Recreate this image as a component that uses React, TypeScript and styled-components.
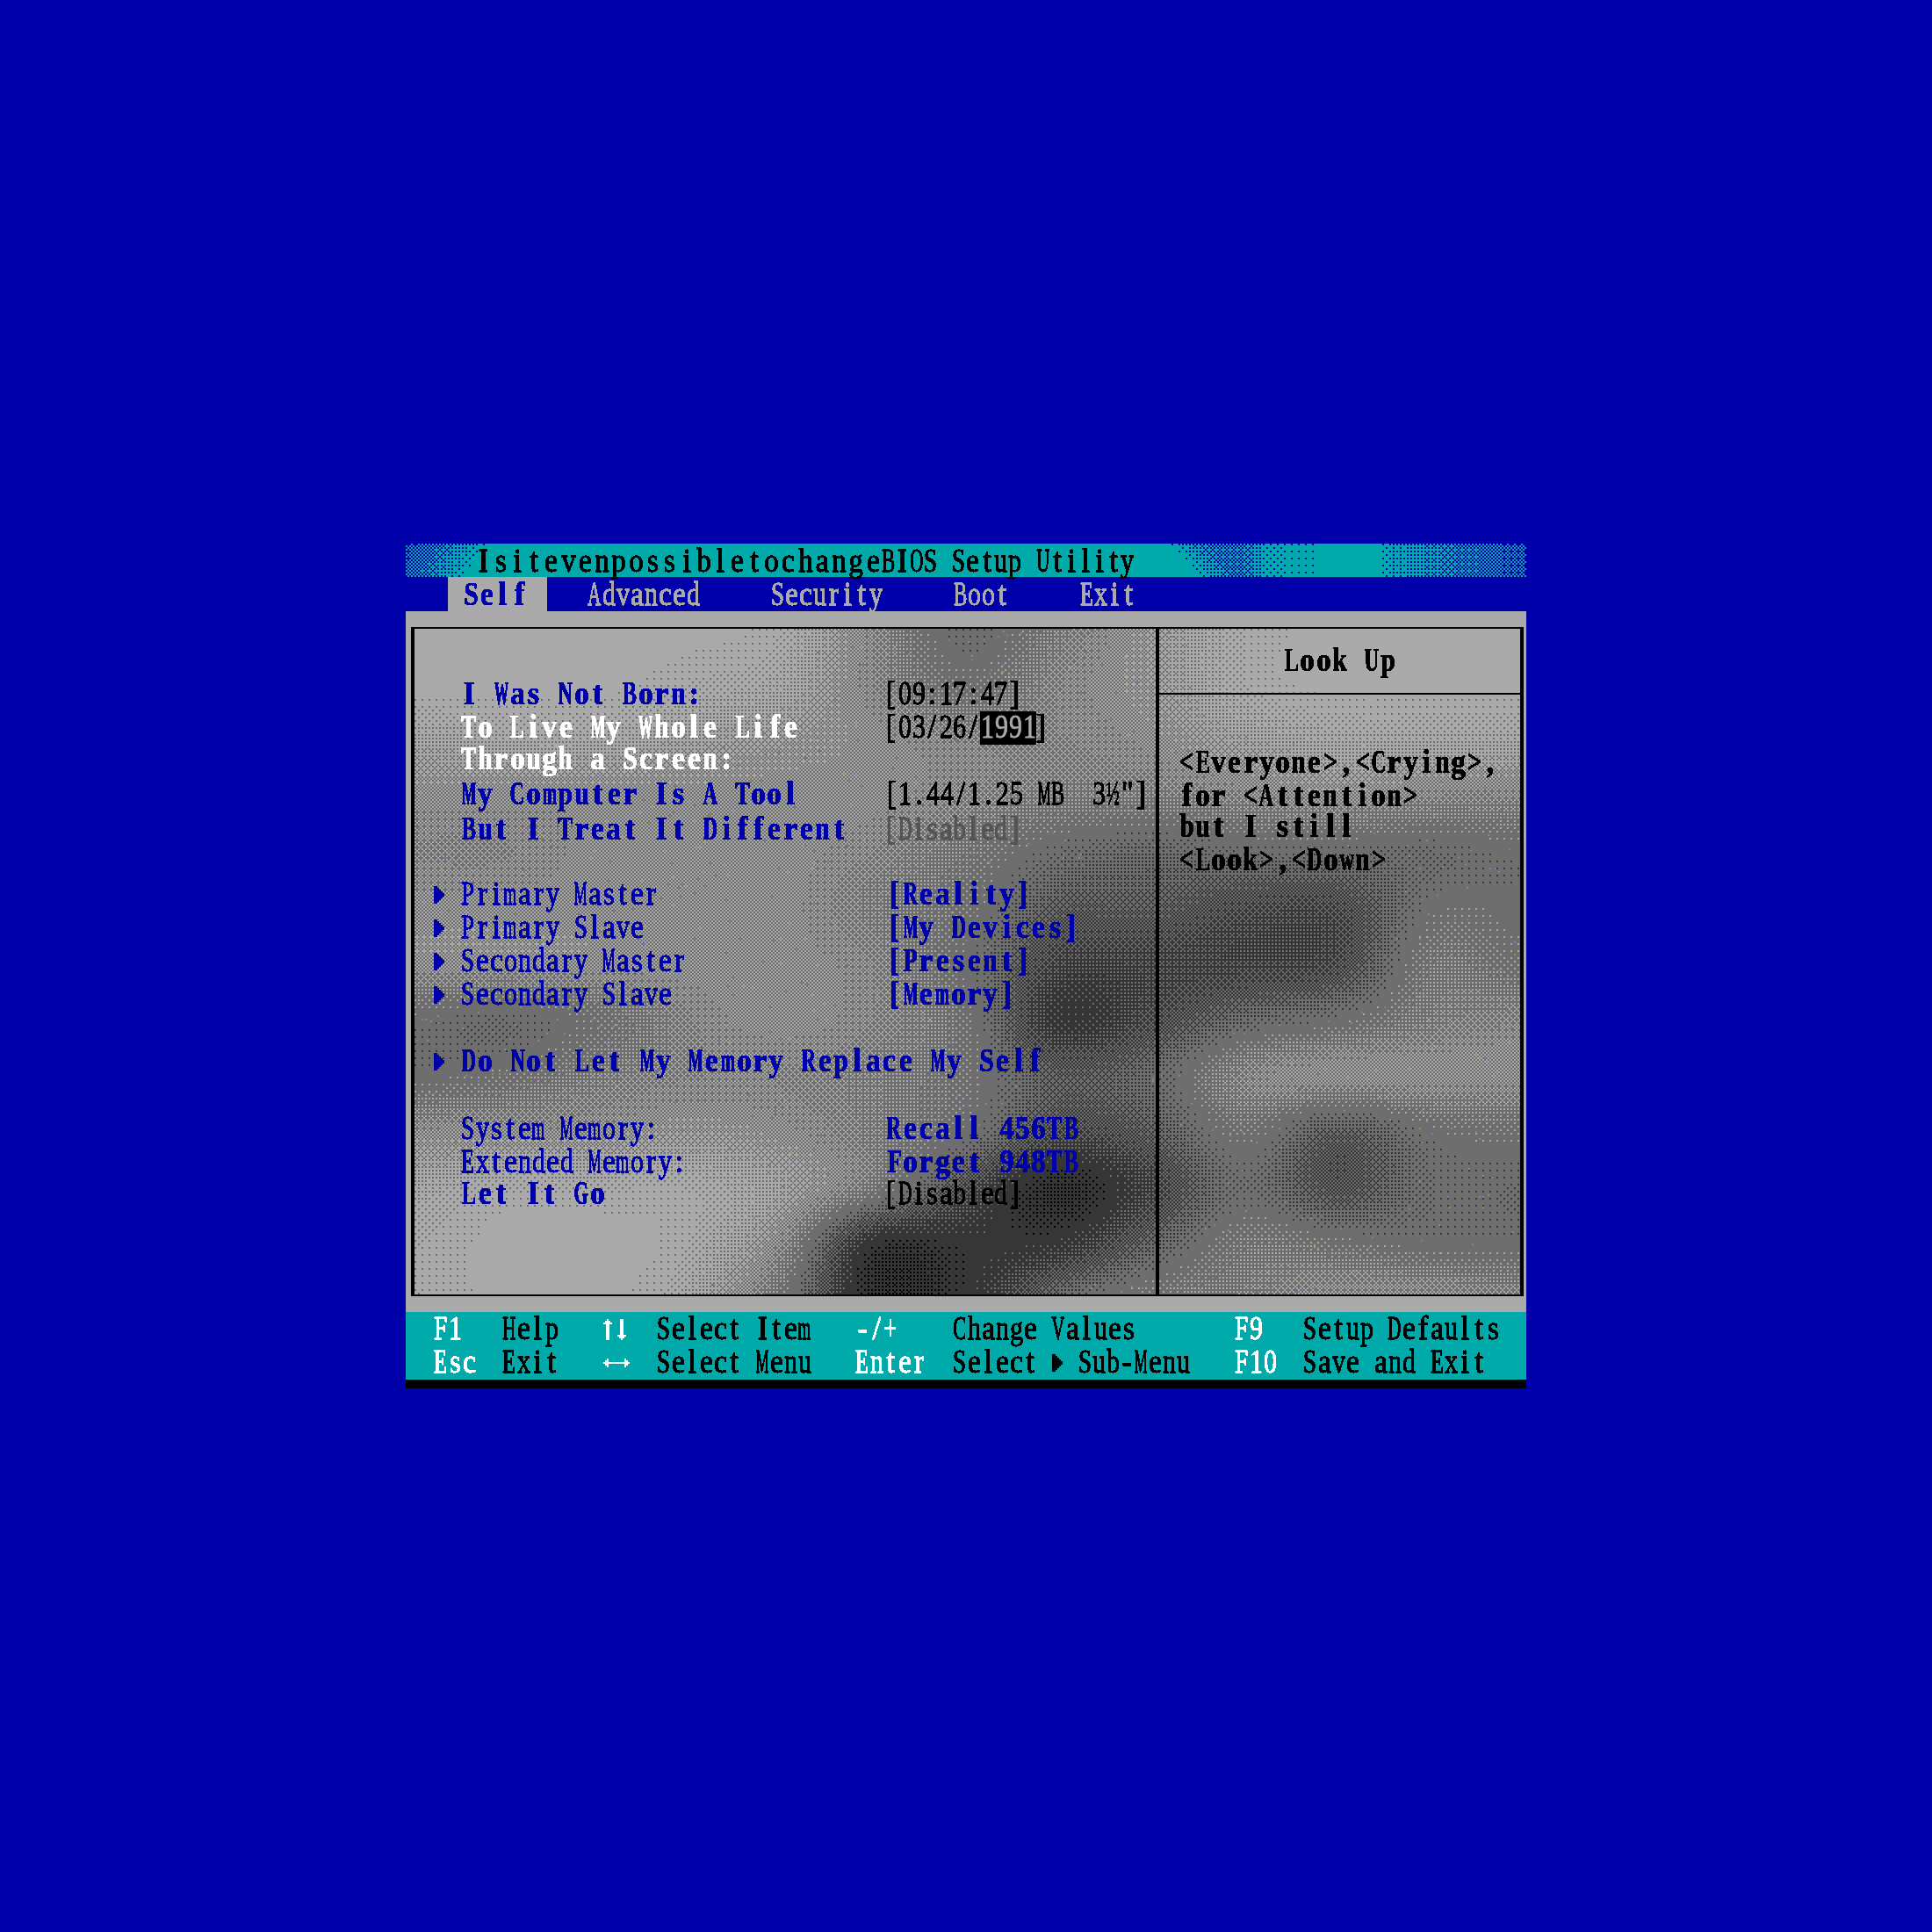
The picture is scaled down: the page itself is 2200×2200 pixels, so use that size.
import React, { useEffect, useRef } from "react";
import styled, { createGlobalStyle } from "styled-components";

const BLUE = "#0000aa";
const TEAL = "#00aaaa";
const GRAY = "#aaaaaa";

const GlobalStyle = createGlobalStyle`
  html, body {
    margin: 0;
    background: ${BLUE};
  }
`;

const Page = styled.div`
  width: 2200px;
  height: 2200px;
  padding: 619px 0 0 462px;
  box-sizing: border-box;
`;

const Screen = styled.div`
  width: 1276px;
  display: flex;
  flex-direction: column;
`;

const TitleBar = styled.div`
  position: relative;
  height: 38px;
  box-sizing: border-box;
  background: ${TEAL};
  padding: 4px 0 0 79px;
  display: flex;
  align-items: center;
`;

const TabBar = styled.div`
  height: 39px;
  padding-left: 48px;
  display: flex;
`;

const Tab = styled.div<{ $active?: boolean }>`
  display: flex;
  align-items: center;
  padding: ${(p) => (p.$active ? "2px 23px 0 17px" : "2px 40px 0")};
  margin-right: ${(p) => (p.$active ? "6px" : "0")};
  background: ${(p) => (p.$active ? GRAY : "transparent")};
`;

const Band = styled.div`
  background: ${GRAY};
  padding: 18px 3px 18px 6px;
`;

const Box = styled.div`
  position: relative;
  height: 762px;
  box-sizing: border-box;
  border: solid #000;
  border-width: 2px 4px;
  display: flex;
  overflow: hidden;
`;

const Wallpaper = styled.canvas`
  position: absolute;
  left: 0;
  top: 0;
  width: 1260px;
  height: 758px;
  image-rendering: pixelated;
`;

const TitleDither = styled.canvas`
  position: absolute;
  left: 0;
  top: 0;
  width: 1276px;
  height: 38px;
  image-rendering: pixelated;
`;

const MainPanel = styled.div`
  position: relative;
  width: 844px;
  box-sizing: border-box;
  padding: 56px 0 0 22px;
  display: flex;
  flex-direction: column;
`;

const Row = styled.div<{ $top?: number }>`
  height: 38px;
  margin-top: ${(p) => p.$top ?? 0}px;
  display: grid;
  grid-template-columns: 31px 482px 1fr;
  align-items: center;
`;

const Value = styled.div<{ $wide?: boolean }>`
  padding-left: ${(p) => (p.$wide ? "2px" : "0")};
`;

const SidePanel = styled.div`
  position: relative;
  flex: 1;
  border-left: 4px solid #000;
  display: flex;
  flex-direction: column;
`;

const SideHead = styled.div`
  height: 73px;
  border-bottom: 2px solid #000;
  display: flex;
  align-items: center;
  justify-content: center;
`;

const SideBody = styled.div`
  padding: 59px 0 0 22px;
  display: flex;
  flex-direction: column;
`;

const SideLine = styled.div<{ $top?: number }>`
  height: 38px;
  margin-top: ${(p) => p.$top ?? 0}px;
`;

const Footer = styled.div`
  background: ${TEAL};
  height: 76px;
  border-bottom: 10px solid #000;
  padding: 1px 0 0 32px;
  display: grid;
  grid-template-columns: 78px 115px 61px 226px 111px 321px 78px 1fr;
  grid-auto-rows: 38px;
  align-items: center;
`;

const SubMenu = styled.div`
  display: flex;
  align-items: center;
  gap: 1px;
`;

const Line = styled.span<{ $color: string; $bg?: string }>`
  display: inline-block;
  white-space: pre;
  color: ${(p) => p.$color};
  background: ${(p) => p.$bg ?? "transparent"};
  filter: url(#crisp);
  vertical-align: top;
`;

const Glyph = styled.span<{ $bold?: boolean }>`
  display: inline-block;
  font: ${(p) => (p.$bold ? 700 : 400)} 38px/38px "Liberation Serif", serif;
  -webkit-text-stroke: ${(p) => (p.$bold ? "0.5px" : "0.8px")} currentColor;
  white-space: pre;
`;

const Icon = styled.svg`
  display: block;
  shape-rendering: crispEdges;
`;

const measure = (() => {
  const ctx = document.createElement("canvas").getContext("2d")!;
  const cache = new Map<string, number>();
  return (ch: string, bold: boolean) => {
    const key = ch + (bold ? "b" : "r");
    if (!cache.has(key)) {
      ctx.font = `${bold ? 700 : 400} 38px "Liberation Serif"`;
      cache.set(key, ctx.measureText(ch).width);
    }
    return cache.get(key)!;
  };
})();

function Txt({
  children,
  w = 16,
  bold = false,
  color = "#000",
  bg,
}: {
  children: string;
  w?: number;
  bold?: boolean;
  color?: string;
  bg?: string;
}) {
  return (
    <Line $color={color} $bg={bg}>
      {[...children].map((ch, i) => {
        const nat = measure(ch, bold);
        const target = w > 17 ? 16.5 : 15;
        const scale = nat * 0.9 < target ? 0.9 : target / nat;
        return (
          <Glyph
            key={i}
            $bold={bold}
            style={{
              margin: `0 ${(w - nat) / 2}px`,
              transform: `translateY(-2px) scaleX(${scale})`,
            }}
          >
            {ch}
          </Glyph>
        );
      })}
    </Line>
  );
}

const Triangle = ({ color = BLUE }: { color?: string }) => (
  <Icon width="12" height="20" viewBox="0 0 12 20">
    <path
      fill={color}
      d="M0 0h4v2h2v2h2v2h2v2h2v4h-2v2h-2v2h-2v2h-2v2h-4z"
    />
  </Icon>
);

const UpDown = () => (
  <Icon width="30" height="24" viewBox="0 0 30 24">
    <path
      fill="#fff"
      d="M4 0h2v2h2v2h2v2h-3v18h-4v-18h-3v-2h2v-2h2zM19 0h4v18h3v2h-2v2h-2v2h-2v-2h-2v-2h-2v-2h3z"
    />
  </Icon>
);

const LeftRight = () => (
  <Icon width="30" height="12" viewBox="0 0 30 12">
    <path
      fill="#fff"
      d="M0 5h30v2h-30zM2 3h2v6h-2zM4 1h2v10h-2zM24 1h2v10h-2zM26 3h2v6h-2z"
    />
  </Icon>
);

// darkness of the wallpaper, 0 = light gray, 1 = mid gray, 2 = dark gray, 3 = black
const CLOUDS = [
  [0, 0, 0, 0, 0.1, 0.6, 1.1, 0.7, 0.4, 0.1, 0, 0, 0],
  [0, 0, 0, 0.1, 0.2, 0.6, 0.9, 0.6, 0.4, 0.1, 0, 0, 0],
  [0.25, 0.2, 0.2, 0.3, 0.4, 0.5, 0.6, 0.6, 0.5, 0.3, 0.2, 0.2, 0.2],
  [0.5, 0.5, 0.5, 0.5, 0.5, 0.5, 0.6, 0.7, 0.7, 0.6, 0.5, 0.6, 0.6],
  [0.6, 0.6, 0.5, 0.5, 0.5, 0.6, 0.8, 1.1, 1.2, 1.1, 1.1, 1.1, 1],
  [0.5, 0.5, 0.5, 0.5, 0.5, 0.7, 0.9, 1.4, 1.4, 1.6, 1.6, 1, 1],
  [0.5, 0.5, 0.5, 0.5, 0.5, 0.6, 1, 1.7, 1.7, 1.7, 1.6, 0.8, 0.9],
  [1, 1.1, 0.9, 0.6, 0.5, 0.6, 0.9, 1.9, 1.6, 1.2, 1, 0.7, 0.6],
  [1, 0.9, 0.7, 0.6, 0.6, 0.7, 0.9, 1.4, 1.2, 0.6, 0.5, 0.5, 0.5],
  [0.5, 0.5, 0.5, 0.4, 0.5, 0.7, 1, 1.6, 1.4, 0.9, 1.4, 1, 0.9],
  [0.2, 0.1, 0.1, 0.1, 0.3, 0.8, 1.6, 2.25, 1.7, 1.1, 1.5, 1.1, 1.1],
  [0.1, 0, 0, 0.1, 0.6, 2.05, 2, 1.9, 1.3, 0.8, 0.9, 1, 1],
  [0.1, 0, 0, 0.2, 0.9, 2.25, 2, 1.2, 0.8, 0.7, 0.5, 0.5, 0.6],
];

const BAYER = [
  [0, 8, 2, 10],
  [12, 4, 14, 6],
  [3, 11, 1, 9],
  [15, 7, 13, 5],
];

const threshold = (x: number, y: number) => (BAYER[y % 4][x % 4] + 0.5) / 16;

const cubic = (a: number, b: number, c: number, d: number, t: number) =>
  b +
  0.5 *
    t *
    (c - a + t * (2 * a - 5 * b + 4 * c - d + t * (3 * (b - c) + d - a)));

function sampleClouds(u: number, v: number) {
  const at = (r: number, c: number) =>
    CLOUDS[Math.max(0, Math.min(12, r))][Math.max(0, Math.min(12, c))];
  const c = Math.floor(u);
  const r = Math.floor(v);
  const rows = [-1, 0, 1, 2].map((d) =>
    cubic(
      at(r + d, c - 1),
      at(r + d, c),
      at(r + d, c + 1),
      at(r + d, c + 2),
      u - c
    )
  );
  return Math.max(0, cubic(rows[0], rows[1], rows[2], rows[3], v - r));
}

function drawWallpaper(cv: HTMLCanvasElement) {
  const ctx = cv.getContext("2d")!;
  const palette = ["#aaaaaa", "#6e6e6e", "#363636", "#000000"];
  let seed = 41;
  const rnd = () => {
    seed = (seed * 16807) % 2147483647;
    return seed / 2147483647;
  };
  for (let y = 0; y < cv.height; y++) {
    for (let x = 0; x < cv.width; x++) {
      const px = (2 * x + 3) * 1.2346;
      const py = (2 * y + 2) * 2.036;
      const v = sampleClouds(px / 130, py / 130);
      const low = Math.floor(v);
      const pick = v - low > threshold(x, y) ? low + 1 : low;
      ctx.fillStyle = palette[Math.min(3, pick)];
      const n = rnd();
      if (v > 0.25 && v < 1.2 && n < 0.006) {
        ctx.fillStyle = n < 0.0035 ? "#8f8f62" : "#7a7ab4";
      }
      ctx.fillRect(x, y, 1, 1);
    }
  }
}

function stops(list: number[][], x: number) {
  for (let i = 1; i < list.length; i++) {
    if (x <= list[i][0]) {
      const [x0, a] = list[i - 1];
      const [x1, b] = list[i];
      return a + ((b - a) * (x - x0)) / (x1 - x0);
    }
  }
  return list[list.length - 1][1];
}

function drawTitle(cv: HTMLCanvasElement) {
  const ctx = cv.getContext("2d")!;
  const curve = [
    [0, 0.55],
    [16, 0.5],
    [28, 0.3],
    [42, 0.1],
    [46, 0],
    [434, 0],
    [446, 0.25],
    [456, 0.42],
    [477, 0.42],
    [490, 0.14],
    [512, 0.05],
    [525, 0],
    [552, 0],
    [556, 0.12],
    [575, 0.25],
    [600, 0.42],
    [625, 0.55],
    [640, 0.55],
  ];
  ctx.fillStyle = BLUE;
  for (let y = 0; y < cv.height; y++) {
    for (let x = 0; x < cv.width; x++) {
      // the blue fades off a little earlier on the lower rows at the left
      const slant = x < 100 ? y * 0.6 : x > 400 && x < 470 ? -y * 0.8 : 0;
      if (stops(curve, x + slant) > threshold(x, y)) {
        ctx.fillRect(x, y, 1, 1);
      }
    }
  }
}

const ROWS = [
  { top: 0, label: "I Was Not Born:", lw: 18.3, lc: BLUE, value: "[09:17:47]", vw: 15.6 },
  { top: 0, label: "To Live My Whole Life", lw: 18.3, lc: "#fff", date: true },
  { top: -2, label: "Through a Screen:", lw: 18.3, lc: "#fff" },
  { top: 2, label: "My Computer Is A Tool", lw: 18.3, lc: BLUE, value: '[1.44/1.25 MB  3½"]', vw: 15.8 },
  { top: 2, label: "But I Treat It Different", lw: 18.3, lc: BLUE, value: "[Disabled]", vc: "#555555", vw: 15.6 },
  { top: 36, arrow: true, label: "Primary Master", lw: 16, lc: BLUE, value: "[Reality]", vc: BLUE, vw: 18.3 },
  { top: 0, arrow: true, label: "Primary Slave", lw: 16, lc: BLUE, value: "[My Devices]", vc: BLUE, vw: 18.3 },
  { top: 0, arrow: true, label: "Secondary Master", lw: 16, lc: BLUE, value: "[Present]", vc: BLUE, vw: 18.3 },
  { top: 0, arrow: true, label: "Secondary Slave", lw: 16, lc: BLUE, value: "[Memory]", vc: BLUE, vw: 18.3 },
  { top: 38, arrow: true, label: "Do Not Let My Memory Replace My Self", lw: 18.4, lc: BLUE },
  { top: 39, label: "System Memory:", lw: 16, lc: BLUE, value: "Recall 456TB", vc: BLUE, vw: 18.3 },
  { top: 0, label: "Extended Memory:", lw: 16, lc: BLUE, value: "Forget 948TB", vc: BLUE, vw: 18.3 },
  { top: -2, label: "Let It Go", lw: 18.3, lc: BLUE, value: "[Disabled]", vw: 15.6 },
];

const HELP = [
  "<Everyone>,<Crying>,",
  "for <Attention>",
  "but I still",
  "<Look>,<Down>",
];

export default function App() {
  const wall = useRef<HTMLCanvasElement>(null);
  const title = useRef<HTMLCanvasElement>(null);

  useEffect(() => {
    if (wall.current) drawWallpaper(wall.current);
    if (title.current) drawTitle(title.current);
  }, []);

  return (
    <Page>
      <GlobalStyle />
      <svg width="0" height="0" style={{ position: "absolute" }}>
        <filter id="crisp" colorInterpolationFilters="sRGB" x="-5%" y="-5%" width="110%" height="110%">
          <feComponentTransfer>
            <feFuncA type="discrete" tableValues="0 1 1" />
          </feComponentTransfer>
        </filter>
      </svg>
      <Screen>
        <TitleBar>
          <TitleDither ref={title} width={638} height={19} />
          <Txt w={19.3}>Isitevenpossibletochange</Txt>
          <Txt>BIOS Setup Utility</Txt>
        </TitleBar>
        <TabBar>
          <Tab $active>
            <Txt w={18.3} bold color={BLUE}>Self</Txt>
          </Tab>
          <Tab><Txt color={GRAY}>Advanced</Txt></Tab>
          <Tab><Txt color={GRAY}>Security</Txt></Tab>
          <Tab><Txt color={GRAY}>Boot</Txt></Tab>
          <Tab><Txt color={GRAY}>Exit</Txt></Tab>
        </TabBar>
        <Band>
          <Box>
            <Wallpaper ref={wall} width={630} height={379} />
            <MainPanel>
              {ROWS.map((r) => (
                <Row key={r.label} $top={r.top}>
                  <div>{r.arrow && <Triangle />}</div>
                  <div>
                    <Txt w={r.lw} bold={r.lw > 16} color={r.lc}>{r.label}</Txt>
                  </div>
                  <Value $wide={(r.vw ?? 16) > 17}>
                    {r.date && (
                      <>
                        <Txt w={15.6}>[03/26/</Txt>
                        <Txt color={GRAY} bg="#000">1991</Txt>
                        <Txt w={10}>]</Txt>
                      </>
                    )}
                    {r.value && (
                      <Txt w={r.vw ?? 16} bold={(r.vw ?? 16) > 17} color={r.vc ?? "#000"}>
                        {r.value}
                      </Txt>
                    )}
                  </Value>
                </Row>
              ))}
            </MainPanel>
            <SidePanel>
              <SideHead>
                <Txt w={18.3} bold>Look Up</Txt>
              </SideHead>
              <SideBody>
                {HELP.map((line, i) => (
                  <SideLine key={line} $top={i === 2 ? -3 : 0}>
                    <Txt w={18.2} bold>{line}</Txt>
                  </SideLine>
                ))}
              </SideBody>
            </SidePanel>
          </Box>
        </Band>
        <Footer>
          <Txt color="#fff">F1</Txt>
          <Txt>Help</Txt>
          <UpDown />
          <Txt>Select Item</Txt>
          <Txt color="#fff">-/+</Txt>
          <Txt>Change Values</Txt>
          <Txt color="#fff">F9</Txt>
          <Txt>Setup Defaults</Txt>
          <Txt color="#fff">Esc</Txt>
          <Txt>Exit</Txt>
          <LeftRight />
          <Txt>Select Menu</Txt>
          <Txt color="#fff">Enter</Txt>
          <SubMenu>
            <Txt>Select </Txt>
            <Triangle color="#000" />
            <Txt> Sub-Menu</Txt>
          </SubMenu>
          <Txt color="#fff">F10</Txt>
          <Txt>Save and Exit</Txt>
        </Footer>
      </Screen>
    </Page>
  );
}
